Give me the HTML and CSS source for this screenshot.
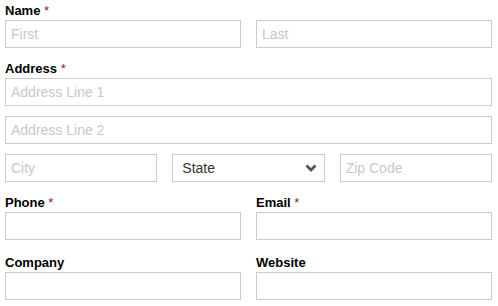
FILE: index.html
```html
<!DOCTYPE html>
<html>
<head>
  <meta charset="utf-8">
  <meta name="viewport" content="width=device-width">
  <title>Contact Form</title>
  <link rel="stylesheet" href="styles.css">
</head>
<body>
  <form class="form">
    <div class="field">
      <label class="label">Name <span class="req">*</span></label>
      <div class="row row_2">
        <input class="input" type="text" placeholder="First">
        <input class="input" type="text" placeholder="Last">
      </div>
    </div>
    <div class="field">
      <label class="label">Address <span class="req">*</span></label>
      <input class="input line" type="text" placeholder="Address Line 1">
      <input class="input line" type="text" placeholder="Address Line 2">
      <div class="row row_3">
        <input class="input" type="text" placeholder="City">
        <div class="select">
          <span>State</span>
          <svg width="12" height="8" viewBox="0 0 12 8"><path d="M1.5 1.5 L6 6 L10.5 1.5" fill="none" stroke="#555" stroke-width="2.8"/></svg>
        </div>
        <input class="input" type="text" placeholder="Zip Code">
      </div>
    </div>
    <div class="row row_2 field field_wide">
      <div>
        <label class="label">Phone <span class="req">*</span></label>
        <input class="input" type="text">
      </div>
      <div>
        <label class="label">Email <span class="req">*</span></label>
        <input class="input" type="text">
      </div>
    </div>
    <div class="row row_2 field">
      <div>
        <label class="label">Company</label>
        <input class="input" type="text">
      </div>
      <div>
        <label class="label">Website</label>
        <input class="input" type="text">
      </div>
    </div>
  </form>
</body>
</html>
```

FILE: styles.css
```css
body {
  margin: 0;
  font-family: "Liberation Sans", Arial, sans-serif;
  background-color: #ffffff;
}

.form {
  padding: 0 6px 0 5px;
}

.field {
  margin-bottom: 10px;
}
.field_wide {
  margin-bottom: 12px;
}

.label {
  display: block;
  height: 16px;
  padding-top: 3px;
  margin-bottom: 1px;
  font-size: 13px;
  font-weight: bold;
  line-height: 16px;
  color: #000000;
}
.req {
  color: #7a2a2a;
  font-weight: normal;
}

.row {
  display: grid;
  column-gap: 15px;
}
.row_2 {
  grid-template-columns: 1fr 1fr;
}
.row_3 {
  grid-template-columns: 1fr 1fr 1fr;
}

.input {
  display: block;
  box-sizing: border-box;
  width: 100%;
  height: 28px;
  margin: 0;
  padding: 0 5px;
  border: 1px solid #cccccc;
  border-radius: 0;
  font-family: "Liberation Sans", Arial, sans-serif;
  font-size: 14px;
  color: #333333;
  outline: none;
}
.input::placeholder {
  color: #c8c8c8;
}
.line {
  margin-bottom: 10px;
}

.select {
  display: flex;
  box-sizing: border-box;
  height: 28px;
  padding: 0 7px 0 9px;
  justify-content: space-between;
  align-items: center;
  border: 1px solid #cccccc;
  font-size: 14px;
  color: #333333;
}
```
